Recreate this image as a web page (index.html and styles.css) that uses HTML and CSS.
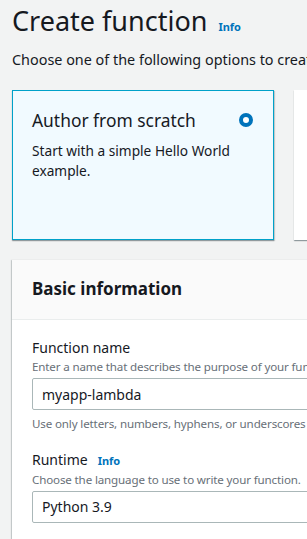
FILE: index.html
```html
<!DOCTYPE html>
<html lang="en">
<head>
  <meta charset="UTF-8" />
  <meta name="viewport" content="width=device-width, initial-scale=1" />
  <title>Create function</title>
  <link rel="stylesheet" href="styles.css">
</head>
<body>
  <div class="page">
    <h1 class="title">Create function <a class="info" href="#">Info</a></h1>
    <p class="lead">Choose one of the following options to create your function.</p>

    <div class="options">
      <div class="option selected">
        <div class="option-head">
          <span class="option-title">Author from scratch</span>
          <span class="radio"></span>
        </div>
        <p class="option-desc">Start with a simple Hello World example.</p>
      </div>
      <div class="option">
        <div class="option-head">
          <span class="option-title">Use a blueprint</span>
          <span class="radio off"></span>
        </div>
        <p class="option-desc">Build a Lambda application from sample code.</p>
      </div>
    </div>

    <div class="panel">
      <div class="panel-head">
        <h2>Basic information</h2>
      </div>
      <div class="panel-body">
        <div class="field">
          <label for="fnName">Function name</label>
          <div class="hint">Enter a name that describes the purpose of your function.</div>
          <input id="fnName" type="text" value="myapp-lambda" />
          <div class="hint after">Use only letters, numbers, hyphens, or underscores with no spaces.</div>
        </div>
        <div class="field">
          <label for="runtime">Runtime <a class="info" href="#">Info</a></label>
          <div class="hint">Choose the language to use to write your function.</div>
          <div class="select" id="runtime">Python 3.9</div>
        </div>
      </div>
    </div>
  </div>
</body>
</html>
```

FILE: styles.css
```css
* {
  box-sizing: border-box;
}
body {
  margin: 0;
  background: #f2f3f3;
  font-family: 'Noto Sans', 'Open Sans', sans-serif;
  color: #16191f;
  overflow: hidden;
}
.page {
  padding: 0 12px;
  width: 600px;
}
.title {
  margin: 0;
  height: 41px;
  padding-top: 1px;
  font-size: 27px;
  font-weight: 400;
  line-height: 40px;
  white-space: nowrap;
}
.title .info {
  margin-left: 4px;
  vertical-align: baseline;
}
.info {
  color: #0073bb;
  font-size: 11px;
  font-weight: 700;
  text-decoration: none;
}
.lead {
  margin: 9px 0 0;
  font-size: 14.4px;
  line-height: 20px;
  white-space: nowrap;
}
.options {
  display: flex;
  gap: 20px;
  margin-top: 20px;
}
.option {
  flex: none;
  width: 262px;
  height: 150px;
  background: #fff;
  border: 1px solid #fff;
  box-shadow: 0 1px 1px rgba(0, 28, 36, 0.3), 1px 1px 1px rgba(0, 28, 36, 0.15);
  padding: 16px 19px;
}
.option.selected {
  background: #f1faff;
  border-color: #00a1c9;
}
.option-head {
  display: flex;
  justify-content: space-between;
  align-items: center;
}
.option-title {
  font-size: 17.4px;
  line-height: 26px;
}
.radio {
  width: 14px;
  height: 14px;
  border-radius: 50%;
  border: 4px solid #0073bb;
  background: #fff;
  margin-right: 1px;
}
.radio.off {
  border: 2px solid #687078;
}
.option-desc {
  margin: 8px 0 0;
  font-size: 13.7px;
  line-height: 20px;
}
.panel {
  margin-top: 20px;
  background: #fff;
  box-shadow: 0 1px 1px rgba(0, 28, 36, 0.3), -1px 0 1px rgba(0, 28, 36, 0.15);
}
.panel-head {
  background: #fafafa;
  border-bottom: 1px solid #eaeded;
  padding: 18px 20px 19px;
}
.panel-head h2 {
  margin: 0;
  font-size: 17px;
  line-height: 22px;
  font-weight: 700;
}
.panel-body {
  padding: 18px 20px 20px;
}
.field + .field {
  margin-top: 18px;
}
label {
  display: flex;
  align-items: baseline;
  gap: 10px;
  font-size: 14px;
  line-height: 20px;
}
.hint {
  font-size: 11.6px;
  letter-spacing: -0.15px;
  line-height: 17px;
  color: #687078;
  white-space: nowrap;
}
.hint.after {
  margin-top: 5px;
}
input[type="text"],
.select {
  display: block;
  width: 100%;
  margin-top: 3px;
  height: 32px;
  padding: 0 9px;
  border: 1px solid #aab7b8;
  border-radius: 2px;
  font: inherit;
  font-size: 14px;
  line-height: 30px;
  color: #16191f;
  background: #fff;
}
```
